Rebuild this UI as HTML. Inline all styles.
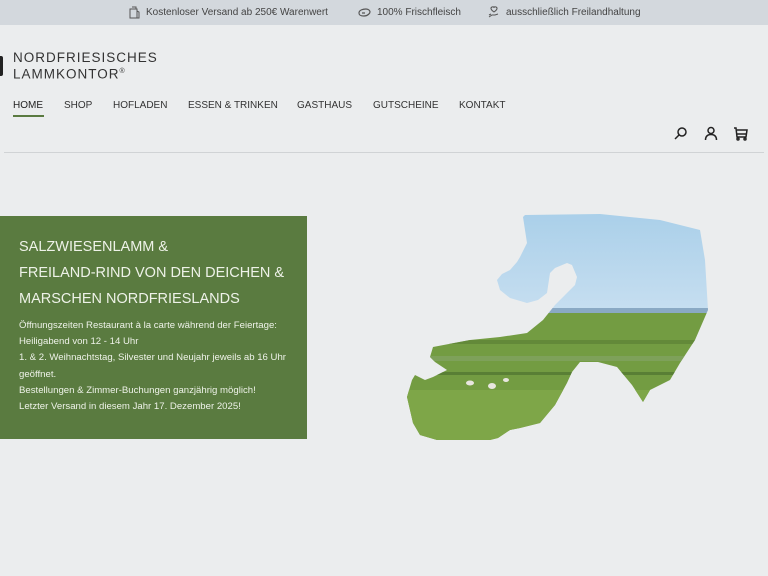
<!DOCTYPE html>
<html><head><meta charset="utf-8"><style>
*{margin:0;padding:0;box-sizing:border-box}
body{width:768px;height:576px;background:#ebedee;font-family:"Liberation Sans",sans-serif;position:relative;overflow:hidden;color:#333}
.top{position:absolute;left:0;top:0;width:768px;height:25px;background:#d3d8dd;font-size:10px;color:#444}
.top span{position:absolute;top:7px;white-space:nowrap}
.logo{position:absolute;left:13px;top:51px;font-size:13.5px;letter-spacing:1px;line-height:14px;color:#333}
.bar{position:absolute;left:0;top:56px;width:3px;height:20px;background:#222;border-radius:0 2px 2px 0}
.nav{position:absolute;top:100px;font-size:10px;color:#333}
.nav span{position:absolute;white-space:nowrap}
.ul{position:absolute;left:13px;top:115px;width:31px;height:2px;background:#5a7a40}
.line{position:absolute;left:4px;top:152px;width:760px;height:1px;background:#d0d3d5}
.box{position:absolute;left:0;top:216px;width:307px;height:223px;background:#5a7b40;color:#eef2e8}
.h{position:absolute;left:19px;top:18px;font-size:14.5px;line-height:26px;white-space:nowrap}
.p{position:absolute;left:19px;top:102px;font-size:9.6px;line-height:16.2px;white-space:nowrap}
</style></head><body>
<div class="top">
<svg style="position:absolute;left:128px;top:6px" width="12" height="13" viewBox="0 0 12 13" fill="none" stroke="#555" stroke-width="1"><path d="M2 3h7v9H2zM9 5l2 1v6H9M4 1h4v2"/></svg>
<span style="left:146px">Kostenloser Versand ab 250€ Warenwert</span>
<svg style="position:absolute;left:357px;top:7px" width="14" height="11" viewBox="0 0 14 11" fill="none" stroke="#555" stroke-width="1.2"><path d="M2 6c0-3 4-4 7-4s4 2 4 3-2 4-6 4-5-1-5-3zM5 6h3"/></svg>
<span style="left:377px">100% Frischfleisch</span>
<svg style="position:absolute;left:487px;top:5px" width="14" height="14" viewBox="0 0 14 14" fill="none" stroke="#555" stroke-width="1"><path d="M7 7C4 5 3 3 5 2s2 1 2 1 0-2 2-1 1 3-2 5zM2 12l3-2h3l3-1M2 10l2-1"/></svg>
<span style="left:506px">ausschließlich Freilandhaltung</span>
</div>
<div class="bar"></div>
<div class="logo">NORDFRIESISCHES<br>LAMMKONTOR<sup style="font-size:7px">®</sup></div>
<div class="nav">
<span style="left:13px;color:#222">HOME</span>
<span style="left:64px">SHOP</span>
<span style="left:113px">HOFLADEN</span>
<span style="left:188px">ESSEN &amp; TRINKEN</span>
<span style="left:297px">GASTHAUS</span>
<span style="left:373px">GUTSCHEINE</span>
<span style="left:459px">KONTAKT</span>
</div>
<div class="ul"></div>
<svg style="position:absolute;left:674px;top:126px" width="14" height="15" viewBox="0 0 14 15" fill="none" stroke="#222" stroke-width="1.5"><circle cx="8" cy="6" r="4"/><path d="M5 9l-4 4"/></svg>
<svg style="position:absolute;left:704px;top:126px" width="14" height="15" viewBox="0 0 14 15" fill="none" stroke="#222" stroke-width="1.5"><circle cx="7" cy="4.5" r="3"/><path d="M1.5 14c0-4 2.5-5.5 5.5-5.5s5.5 1.5 5.5 5.5"/></svg>
<svg style="position:absolute;left:733px;top:126px" width="15" height="15" viewBox="0 0 15 15" fill="none" stroke="#222" stroke-width="1.5"><path d="M1 2h2l1 9h9l1-7H4M4 8h9"/><circle cx="5" cy="13" r="1"/><circle cx="12" cy="13" r="1"/></svg>
<div class="line"></div>
<div class="box">
<div class="h">SALZWIESENLAMM &amp;<br>FREILAND-RIND VON DEN DEICHEN &amp;<br>MARSCHEN NORDFRIESLANDS</div>
<div class="p">Öffnungszeiten Restaurant à la carte während der Feiertage:<br>Heiligabend von 12 - 14 Uhr<br>1. &amp; 2. Weihnachtstag, Silvester und Neujahr jeweils ab 16 Uhr<br>geöffnet.<br>Bestellungen &amp; Zimmer-Buchungen ganzjährig möglich!<br>Letzter Versand in diesem Jahr 17. Dezember 2025!</div>
</div>
<svg style="position:absolute;left:0;top:0" width="768" height="576">
<defs>
<clipPath id="c"><path d="M525 215L600 214L660 220L700 230L705 260L708 310L695 340L680 363L670 380L650 390L643 402L632 385L617 367L598 362L580 362L572 372L567 383L555 405L540 423L520 428L510 430L498 438L490 440L460 440L437 440L420 435L413 423L407 397L412 380L415 375L425 380L433 377L447 370L435 362L430 357L433 347L470 340L500 337L527 333L543 320L555 305L563 297L575 285L577 277L572 265L567 263L555 268L550 273L547 293L538 300L527 303L510 298L500 290L497 280L502 274L510 270L517 262L520 257L527 243L523 217Z"/></clipPath>
<linearGradient id="s" x1="0" y1="0" x2="0" y2="1"><stop offset="0" stop-color="#a9cfe9"/><stop offset="1" stop-color="#c6def0"/></linearGradient>
</defs>
<g clip-path="url(#c)">
<rect x="400" y="210" width="320" height="100" fill="url(#s)"/>
<rect x="400" y="308" width="320" height="5" fill="#8aa9c4"/>
<rect x="400" y="313" width="320" height="130" fill="#739c42"/>
<rect x="400" y="340" width="320" height="4" fill="#5c8236" opacity=".7"/>
<rect x="400" y="356" width="320" height="5" fill="#85a56a" opacity=".6"/>
<rect x="400" y="372" width="320" height="3" fill="#4f7430" opacity=".7"/>
<rect x="400" y="390" width="320" height="50" fill="#7ea648"/>
<ellipse cx="470" cy="383" rx="4" ry="2.5" fill="#e8e6df"/>
<ellipse cx="492" cy="386" rx="4" ry="3" fill="#e8e6df"/>
<ellipse cx="506" cy="380" rx="3" ry="2" fill="#e8e6df"/>
</g>
</svg>
</body></html>
